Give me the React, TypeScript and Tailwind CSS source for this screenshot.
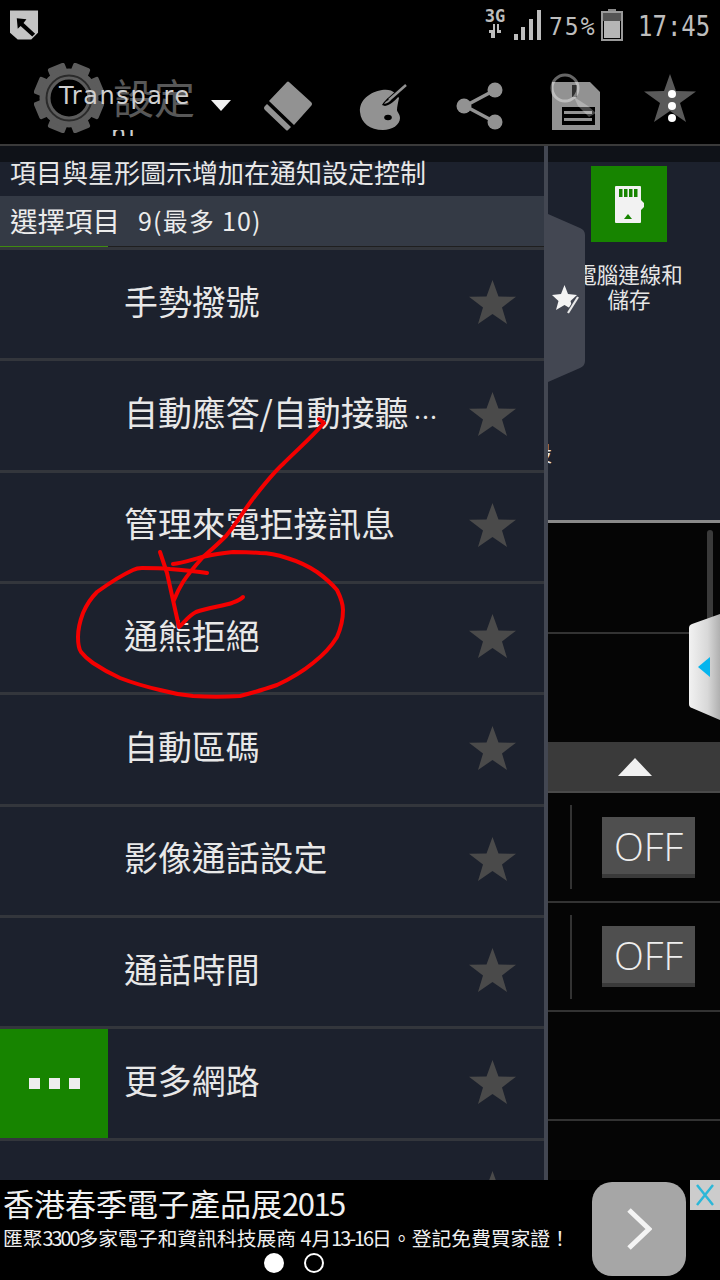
const cjk = { fontFamily: '"Noto Sans CJK TC", "Noto Sans", sans-serif' };

function Star({ className = "" }: { className?: string }) {
  return (
    <svg viewBox="0 0 47 44" className={className} fill="#4a4a4a">
      <polygon points="23.5,0 29.5,16.5 47,16.8 33,27.4 38,44 23.5,34 9,44 14,27.4 0,16.8 17.5,16.5" />
    </svg>
  );
}

const rows = ["手勢撥號", "自動應答/自動接聽", "管理來電拒接訊息", "通熊拒絕", "自動區碼", "影像通話設定", "通話時間", "更多網路", ""];

function Row({ label, green, more }: { label: string; green?: boolean; more?: boolean }) {
  return (
    <div className="h-[111.35px] shrink-0 flex items-center border-b-[3px] border-[#33363c]">
      <div className={`w-[108px] h-full shrink-0 flex items-center justify-center gap-[9px] ${green ? "bg-[#178400]" : ""}`}>
        {green && (
          <>
            <span className="w-[11px] h-[11px] bg-[#eeeeee]" />
            <span className="w-[11px] h-[11px] bg-[#eeeeee]" />
            <span className="w-[11px] h-[11px] bg-[#eeeeee]" />
          </>
        )}
      </div>
      <div className="flex-1 pl-[16px] mb-[7px] text-[33.9px] leading-none text-[#e8e8e8] whitespace-nowrap">
        {label}
        {more && <span className="text-[24px] ml-[5px] tracking-[-1px]">…</span>}
      </div>
      <Star className="w-[47px] h-[44px] mr-[28px] mb-[4px] shrink-0" />
    </div>
  );
}

function OffButton() {
  return (
    <div className="w-[93px] h-[61px] bg-[#4f4f4f] border-b-[4px] border-[#3a3a3a] flex items-center justify-center text-[39px] leading-none font-light text-[#eeeeee]" style={{ fontFamily: '"Open Sans", sans-serif' }}>
      OFF
    </div>
  );
}

function ToolbarIcons() {
  return (
    <>
      <svg viewBox="0 0 50 50" className="absolute left-[263px] top-[81px] w-[50px] h-[50px]" fill="#929292">
        <path d="M26 1 L48 21 Q50 23 48 25 L31 44 L6 20 L24 1 Q25 0 26 1Z" />
        <path d="M4 23 L28 46 L25 49 Q24 50 23 49 L2 29 Q0 27 2 25Z" />
      </svg>
      <svg viewBox="0 0 70 70" className="absolute left-[350px] top-[70px] w-[70px] h-[70px]">
        <path d="M10 42 C9 30 20 22 32 20 C37 19 42 20 45 23 L49 28 C48 33 47 37 47 40 C47 42 50 44 50 48 C50 55 42 60 33 60 C20 60 11 53 10 42Z" fill="#929292" />
        <path d="M32 35 C35 29 41 27 46 23 L49 26 C45 31 40 35 35 36 Z" fill="#000" />
        <path d="M38 31 L56 15" stroke="#000" strokeWidth="4.5" />
        <path d="M39 30 L56 15" stroke="#929292" strokeWidth="2.5" />
        <path d="M34 34 C36 31 38 30 41 29 C40 32 38 33 34 34Z" fill="#929292" />
        <ellipse cx="38" cy="47.5" rx="3.8" ry="2.8" fill="#000" />
      </svg>
      <svg viewBox="0 0 48 48" className="absolute left-[456px] top-[82px] w-[48px] h-[48px]">
        <path d="M39 8 L9 24 L39 40" fill="none" stroke="#929292" strokeWidth="3.5" />
        <circle cx="39" cy="8" r="7.5" fill="#929292" />
        <circle cx="8" cy="24" r="7.5" fill="#929292" />
        <circle cx="39" cy="40" r="7.5" fill="#929292" />
      </svg>
      <svg viewBox="0 0 70 70" className="absolute left-[540px] top-[70px] w-[70px] h-[70px]">
        <path d="M12 12 H50 L60 22 V60 H12Z" fill="#929292" />
        <rect x="32" y="15" width="5" height="12" fill="#303030" />
        <rect x="22" y="37" width="33" height="18" fill="#000" />
        <rect x="24" y="41" width="28" height="3" fill="#929292" />
        <rect x="24" y="48" width="28" height="3" fill="#929292" />
        <circle cx="25" cy="18" r="13" fill="none" stroke="#ffffff" strokeOpacity="0.4" strokeWidth="3" />
        <polygon points="34,27 48,36 56,43 49,47 38,36" fill="#ffffff" fillOpacity="0.28" />
      </svg>
      <svg viewBox="0 0 52 50" className="absolute left-[644px] top-[74px] w-[52px] h-[50px]">
        <polygon points="26,0 32,17 52,17.5 36,29 42,48 26,37 10,48 16,29 0,17.5 20,17" fill="#5a5a5a" />
        <circle cx="28" cy="20" r="4" fill="#fff" />
        <circle cx="28" cy="32" r="4" fill="#fff" />
        <circle cx="28" cy="44" r="4" fill="#fff" />
      </svg>
    </>
  );
}

function Gear() {
  const teeth = [0, 45, 90, 135, 180, 225, 270, 315];
  return (
    <svg viewBox="0 0 70 70" className="absolute left-[34px] top-[63px] w-[70px] h-[70px]">
      {teeth.map((a) => (
        <rect key={a} x="26" y="0" width="18" height="16" rx="2" fill="#5c5c5c" transform={`rotate(${a + 22.5} 35 35)`} />
      ))}
      <circle cx="35" cy="35" r="24" fill="none" stroke="#5c5c5c" strokeWidth="11" />
      <circle cx="35" cy="35" r="22.5" fill="none" stroke="#2a2a2a" strokeWidth="2" />
    </svg>
  );
}

function StatusBar() {
  return (
    <div className="h-[50px] shrink-0 flex items-start pl-[10px] pr-[10px] pt-[9px] text-[#bdbdbd]">
      <svg viewBox="0 0 30 30" className="w-[29px] h-[30px] mt-[1px]">
        <path d="M0 0 H29 V23 L22 30 H8 L0 23Z" fill="#c4c4c4" />
        <path d="M7 8 L17 9 L14 13 L26 24 L23 27 L11 16 L8 19Z" fill="#000" />
      </svg>
      <div className="flex-1" />
      <div className="flex flex-col items-center w-[24px]">
        <span className="text-[17px] leading-[15px] font-bold" style={{ fontFamily: '"DejaVu Sans Mono", monospace' }}>3G</span>
        <svg viewBox="0 0 16 14" className="w-[16px] h-[14px]"><path d="M2 6 H6 V0 H8 V14 H4 V9 H2Z M10 0 H12 V6 H14 V9 H10Z" fill="#bdbdbd" /></svg>
      </div>
      <svg viewBox="0 0 28 32" className="w-[28px] h-[32px] ml-[7px]" fill="#bdbdbd">
        <rect x="0" y="25" width="4" height="6" />
        <rect x="7" y="18" width="4" height="13" />
        <rect x="15" y="10" width="4" height="21" />
        <rect x="23" y="1" width="4" height="30" />
      </svg>
      <span className="ml-[7px] mt-[4px] w-[47px] text-[23px] leading-[26px] tracking-[2px] scale-y-[1.1] whitespace-nowrap" style={{ fontFamily: '"DejaVu Sans Mono", monospace' }}>75%</span>
      <svg viewBox="0 0 22 32" className="w-[22px] h-[32px] ml-[5px]">
        <rect x="7" y="0" width="8" height="3" fill="#8a8a8a" />
        <rect x="1" y="3" width="20" height="28" fill="none" stroke="#9a9a9a" strokeWidth="2" />
        <rect x="2" y="4" width="18" height="8" fill="#555555" />
        <rect x="3" y="12" width="16" height="17" fill="#b5b5b5" />
      </svg>
      <span className="ml-[15px] mt-[3px] w-[72px] text-[24px] leading-[28px] scale-y-[1.2] whitespace-nowrap" style={{ fontFamily: '"DejaVu Sans Mono", monospace' }}>17:45</span>
    </div>
  );
}

function Annotation() {
  return (
    <svg viewBox="0 0 720 1280" className="absolute inset-0 w-[720px] h-[1280px] pointer-events-none" fill="none" stroke="#f40000" strokeWidth="4" strokeLinecap="round" strokeLinejoin="round">
      <path d="M319 419 L324 423 C312 437 297 450 283 464 C272 474 262 487 252 500 C243 512 236 524 226 536 C218 544 210 551 203 557 C195 566 188 574 183 582 C178 590 176 595 174 600" />
      <path d="M160 552 L167 573 L179 627 C184 623 188 616 196 612 C207 608 222 606 232 603 C237 601 240 600 243 597" />
      <path d="M207 573 C195 571 183 570 170 569 C160 568 150 568 142 568 C138 568 135 569 133 570 C120 576 108 584 97 592 C90 599 86 606 83 613 C80 621 78 630 78 637 C78 644 79 649 81 652 C85 657 90 661 93 663 C102 669 111 674 120 678 C133 683 147 687 160 690 C171 693 182 695 193 696 C209 697 224 697 240 696 C253 693 265 689 277 685 C290 679 302 672 313 663 C322 656 331 647 337 637 C341 628 343 619 343 610 C343 602 340 596 337 590 C331 583 324 577 317 572 C308 566 297 561 287 558 C278 555 269 553 260 553 C251 552 242 552 233 552 C224 553 215 554 207 556 C196 558 184 563 173 564" />
    </svg>
  );
}

export default function App() {
  return (
    <div className="relative w-[720px] h-[1280px] overflow-hidden bg-black flex flex-col" style={cjk}>
      <div className="h-[144px] shrink-0 flex flex-col">
        <StatusBar />
        <Gear />
        <span className="absolute left-[113px] top-[72px] text-[41px] leading-[48px] text-[#585858]">設定</span>
        <span className="absolute left-[59px] top-[82px] text-[24px] leading-[28px] tracking-[1.6px] text-[#cfcfcf]" style={{ fontFamily: '"DejaVu Sans", sans-serif' }}>Transpare</span>
        <div className="absolute left-[111px] top-[130px] h-[6px] w-[28px] overflow-hidden">
          <span className="block -mt-[8px] text-[24px] leading-[24px] tracking-[2px] text-[#cfcfcf]" style={{ fontFamily: '"DejaVu Sans", sans-serif' }}>nt</span>
        </div>
        <svg viewBox="0 0 20 11" className="absolute left-[211px] top-[100px] w-[20px] h-[11px]"><polygon points="0,0 20,0 10,11" fill="#f2f2f2" /></svg>
        <ToolbarIcons />
      </div>
      <div className="h-[2px] shrink-0 bg-[#3a3a3a]" />

      <div className="flex-1 min-h-0 flex overflow-hidden relative">
        <div className="w-[544px] shrink-0 bg-[#1c212d] overflow-hidden flex flex-col">
          <div className="h-[16px] shrink-0 bg-[#0f1218]" />
          <div className="h-[34px] shrink-0 pl-[10px] text-[26px] leading-[20px] text-[#e8e8e8] whitespace-nowrap">項目與星形圖示增加在通知設定控制</div>
          <div className="h-[50px] shrink-0 bg-[#343a45] pl-[10px] flex items-center text-[27.5px] text-[#ececec] whitespace-nowrap">
            選擇項目<span className="ml-[18px] text-[25px] tracking-[1.2px]">9(最多 10)</span>
          </div>
          <div className="h-[1px] shrink-0 bg-[#1f1f1f] relative"><div className="w-[108px] h-[1px] bg-[#3f8a10]" /></div>
          <div className="h-[3px] shrink-0 bg-[#33363c]" />
          {rows.map((r, i) => (
            <Row key={i} label={r} green={i === 7} more={i === 1} />
          ))}
        </div>
        <div className="w-[4px] shrink-0 bg-[#434752]" />
        <div className="flex-1 min-w-0 flex flex-col relative">
          <div className="h-[16px] shrink-0 bg-[#0f1218]" />
          <div className="h-[358px] shrink-0 bg-[#1c212d] flex flex-col items-center pr-[10px] pt-[4px] relative overflow-hidden">
            <div className="w-[76px] h-[76px] bg-[#178400] flex items-center justify-center">
              <svg viewBox="0 0 29 37" className="w-[29px] h-[37px]">
                <path d="M1 0 H25 Q26 0 26 1 V14 L29 17 V21 L26 24 V36 Q26 37 25 37 H1 Q0 37 0 36 V1 Q0 0 1 0Z" fill="#f2f2f2" />
                <rect x="4" y="3" width="3.5" height="8" fill="#178400" />
                <rect x="9" y="3" width="3.5" height="8" fill="#178400" />
                <rect x="14" y="3" width="3.5" height="8" fill="#178400" />
                <rect x="19" y="3" width="3.5" height="8" fill="#178400" />
                <polygon points="13,28 17,33 9,33" fill="#178400" />
              </svg>
            </div>
            <div className="mt-[19px] text-[21.5px] leading-[25px] text-[#e6e6e6] text-center whitespace-nowrap w-[112px]">電腦連線和<br />儲存</div>
            <div className="absolute left-0 top-[278px] w-[4px] h-[24px] overflow-hidden">
              <span className="block -ml-[17px] text-[21px] leading-[24px] text-[#e6e6e6]">設</span>
            </div>
          </div>
          <div className="h-[3px] shrink-0 bg-[#8a8a8a]" />
          <div className="flex-1 min-h-0 bg-[#050505] flex flex-col">
            <div className="h-[111px] shrink-0 border-b-[2px] border-[#333333]" />
            <div className="h-[108px] shrink-0" />
            <div className="h-[51px] shrink-0 bg-[#3a3a3a] border-b-[2px] border-[#4a4a4a] flex items-center justify-center pl-[2px]">
              <svg viewBox="0 0 34 18" className="w-[34px] h-[18px]"><polygon points="17,0 34,18 0,18" fill="#f0f0f0" /></svg>
            </div>
            <div className="h-[110px] shrink-0 border-b-[2px] border-[#333333] flex items-center">
              <div className="ml-[22px] w-[2px] h-[84px] bg-[#333333]" />
              <div className="ml-[30px]"><OffButton /></div>
            </div>
            <div className="h-[109px] shrink-0 border-b-[2px] border-[#333333] flex items-center">
              <div className="ml-[22px] w-[2px] h-[84px] bg-[#333333]" />
              <div className="ml-[30px]"><OffButton /></div>
            </div>
            <div className="h-[109px] shrink-0 border-b-[2px] border-[#333333]" />
          </div>
        </div>
      </div>

      <div className="h-[100px] shrink-0 bg-black flex relative">
        <div className="flex-1 min-w-0 pl-[3px] text-[#f0f0f0]">
          <div className="text-[31px] leading-[46px] whitespace-nowrap">香港春季電子產品展<span className="tracking-[-1.5px]">2015</span></div>
          <div className="text-[19.8px] leading-[24px] whitespace-nowrap">匯聚<span className="tracking-[-2px]">3300</span>多家電子和資訊科技展商 4月<span className="tracking-[-2px]">13-16</span>日。登記免費買家證！</div>
          <div className="flex justify-center gap-[20px] w-[582px] mt-[3px]">
            <span className="w-[20px] h-[20px] rounded-full bg-white" />
            <span className="w-[20px] h-[20px] rounded-full border-2 border-white" />
          </div>
        </div>
        <div className="w-[94px] h-[94px] mt-[2px] rounded-[20px] bg-[#a6a6a6] flex items-center justify-center shrink-0">
          <svg viewBox="0 0 26 42" className="w-[26px] h-[42px]"><path d="M3 2 L23 21 L3 40" fill="none" stroke="#f4f4f4" strokeWidth="5" /></svg>
        </div>
        <div className="w-[30px] ml-[4px] h-[30px] bg-[#cccccc] flex items-center justify-center shrink-0">
          <svg viewBox="0 0 20 22" className="w-[20px] h-[22px]"><path d="M2 1 L18 21 M18 1 L2 21" stroke="#2bb7d8" strokeWidth="2.5" /></svg>
        </div>
      </div>

      <svg viewBox="0 0 38 168" className="absolute left-[548px] top-[214px] w-[38px] h-[168px]">
        <path d="M0 0 L32 14 Q37 16 37 21 V147 Q37 152 32 154 L0 168Z" fill="#434752" />
        <polygon points="16.5,71 20,80 29,81 22.5,87 25,96 16.5,91 8,96 10.5,87 4,81 13,80" fill="#f4f4f4" />
        <path d="M30 84 L21 98" stroke="#434752" strokeWidth="5" />
        <path d="M30 83 L20 99" stroke="#e8e8e8" strokeWidth="2.2" />
      </svg>

      <div className="absolute left-[707px] top-[530px] w-[6px] h-[90px] rounded-[3px] bg-[#3a3a3a]" />
      <svg viewBox="0 0 31 106" className="absolute left-[689px] top-[614px] w-[31px] h-[106px]">
        <defs>
          <linearGradient id="handleFill" x1="0" x2="1" y1="0" y2="0">
            <stop offset="0" stopColor="#f2f2f2" />
            <stop offset="0.6" stopColor="#d8d8d8" />
            <stop offset="1" stopColor="#b0b0b0" />
          </linearGradient>
        </defs>
        <path d="M31 0 L3 10 Q0 11 0 14 V90 Q0 93 3 94 L31 106Z" fill="url(#handleFill)" />
        <polygon points="9,53 21,43 21,63" fill="#06b5ee" />
      </svg>

      <Annotation />
    </div>
  );
}
